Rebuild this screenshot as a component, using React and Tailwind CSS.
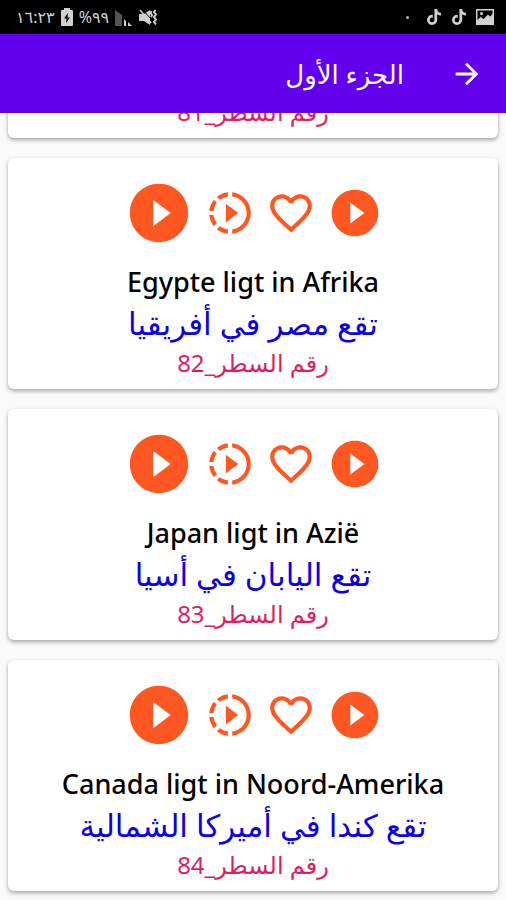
import { FaTiktok } from "react-icons/fa";
import {
  MdArrowForward,
  MdFavoriteBorder,
  MdPlayCircleFilled,
  MdSlowMotionVideo,
} from "react-icons/md";

const sentences = [
  { line: 81 },
  { line: 82, dutch: "Egypte ligt in Afrika", arabic: "تقع مصر في أفريقيا" },
  { line: 83, dutch: "Japan ligt in Azië", arabic: "تقع اليابان في أسيا" },
  { line: 84, dutch: "Canada ligt in Noord-Amerika", arabic: "تقع كندا في أميركا الشمالية" },
];

const BatteryIcon = () => (
  <svg viewBox="0 0 12 18" className="w-3 h-[18px]" fill="currentColor">
    <path
      fillRule="evenodd"
      d="M3 0h6v2h2a1 1 0 0 1 1 1v14a1 1 0 0 1-1 1H1a1 1 0 0 1-1-1V3a1 1 0 0 1 1-1h2zM7 5 3 10.500h2.500L5 15l4-5.500H6.500z"
    />
  </svg>
);

const SignalIcon = () => (
  <svg viewBox="0 0 18 17" className="w-[18px] h-[17px]" fill="currentColor">
    <path d="M0 1 7 6v11H0z" opacity="0.4" />
    <path d="M9 10l2 2v5H9zM13 13l4 4h-4z" />
  </svg>
);

const MuteVibrateIcon = () => (
  <svg viewBox="0 0 18 17" className="w-[18px] h-[17px]" fill="currentColor">
    <path d="M0 5h5l6-4v15L5 12H0z" />
    <path d="M3 0l9 10" stroke="#000" strokeWidth="1" />
    <path d="M1 1l11 13" stroke="currentColor" strokeWidth="1.500" />
    <path
      d="M12.500 2l-1 2 1.500 2-1 2M16.500 1l-1.500 2 2 2.500-2 2.500 2 2.500-2 2.500 2 2.500"
      fill="none"
      stroke="currentColor"
      strokeWidth="2"
    />
  </svg>
);

const PictureIcon = () => (
  <svg viewBox="0 0 18 16" className="w-[18px] h-4" fill="currentColor">
    <path
      fillRule="evenodd"
      d="M0 0h18v16H0zM1.500 1.500V11l3-3 3 2L12 5.500l2 2L16.500 5V1.500z"
    />
    <circle cx="5.500" cy="4.500" r="1.500" />
  </svg>
);

const StatusBar = () => (
  <div className="h-[34px] shrink-0 bg-black text-[#d0d0d0] flex items-center justify-between pl-4 pr-3">
    <div className="flex items-center gap-[9px]">
      <PictureIcon />
      <FaTiktok className="w-4 h-4" />
      <FaTiktok className="w-4 h-4" />
      <span className="w-[3px] h-[3px] mr-2 rounded-full bg-[#b0b0b0]" />
    </div>
    <div dir="ltr" className="flex items-center gap-1.5 text-base leading-5">
      <span>١٦:٢٣</span>
      <BatteryIcon />
      <span>%٩٩</span>
      <SignalIcon />
      <MuteVibrateIcon />
    </div>
  </div>
);

const SentenceCard = ({ sentence }) => (
  <li className="bg-white rounded-md shadow-[0_2px_4px_rgba(0,0,0,0.35)] pt-5 pb-[9px] text-center">
    <div dir="ltr" className="flex items-center justify-center gap-[11px] text-[#ff5722]">
      <button aria-label="Play sentence">
        <MdPlayCircleFilled className="w-[70px] h-[70px]" />
      </button>
      <button aria-label="Play slowly">
        <MdSlowMotionVideo className="w-[50px] h-[50px]" />
      </button>
      <button aria-label="Add to favorites">
        <MdFavoriteBorder className="w-[50px] h-[50px]" />
      </button>
      <button aria-label="Play translation">
        <MdPlayCircleFilled className="w-14 h-14" />
      </button>
    </div>
    {sentence.dutch && (
      <p dir="ltr" className="mt-[15px] text-[27px] leading-[38px] font-medium text-black">
        {sentence.dutch}
      </p>
    )}
    {sentence.arabic && (
      <p className="text-[31px] leading-[44px] text-[#0c00ea]">{sentence.arabic}</p>
    )}
    <p className="text-2xl leading-[35px] text-[#e01e5f]">رقم السطر_{sentence.line}</p>
  </li>
);

const App = () => {
  return (
    <div
      dir="rtl"
      lang="ar"
      className="h-screen flex flex-col bg-[#fafafa] font-['Noto_Sans','DejaVu_Sans',sans-serif]"
    >
      <StatusBar />
      <header className="h-[79px] shrink-0 bg-[#6200ee] text-white flex items-center gap-[46px] px-[22px]">
        <button aria-label="Back">
          <MdArrowForward className="w-[34px] h-[34px]" />
        </button>
        <h1 className="text-[26px] leading-10">الجزء الأول</h1>
      </header>
      {/* reversed column keeps the list scrolled to the newest line */}
      <main className="flex-1 min-h-0 overflow-y-auto flex flex-col-reverse [scrollbar-width:none]">
        <ul className="flex flex-col gap-5 px-2 pb-[9px]">
          {sentences.map((sentence) => (
            <SentenceCard key={sentence.line} sentence={sentence} />
          ))}
        </ul>
      </main>
    </div>
  );
};

export default App;
